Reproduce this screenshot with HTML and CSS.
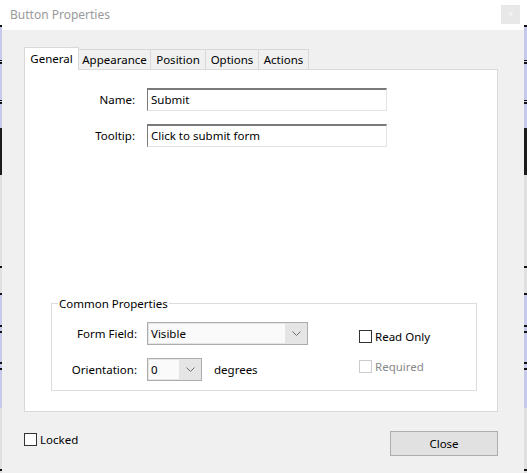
FILE: index.html
```html
<!DOCTYPE html>
<html>
<head>
<meta charset="utf-8">
<link rel="stylesheet" href="styles.css">
</head>
<body>
<div class="screen">
  <div class="strip strip-left"></div>
  <div class="window">
    <div class="titlebar">
      <span class="title">Button Properties</span>
      <span class="close-x">×</span>
    </div>
    <div class="body">
      <div class="tabs">
        <div class="tab active tab-general">General</div>
        <div class="tab tab-appearance">Appearance</div>
        <div class="tab tab-position">Position</div>
        <div class="tab tab-options">Options</div>
        <div class="tab tab-actions">Actions</div>
      </div>
      <div class="panel">
        <div class="fields">
          <label class="lbl">Name:</label>
          <div class="input">Submit</div>
          <label class="lbl">Tooltip:</label>
          <div class="input">Click to submit form</div>
        </div>
        <fieldset class="group">
          <legend class="legend">Common Properties</legend>
          <div class="group-inner">
            <div class="group-grid">
              <span class="glbl">Form Field:</span>
              <div class="select select-wide">
                <span class="select-text">Visible</span>
                <span class="select-arrow"><svg width="9" height="5" viewBox="0 0 9 5"><polyline points="0.5,0.5 4.5,4.5 8.5,0.5" fill="none" stroke="#6d6d6d" stroke-width="1"/></svg></span>
              </div>
              <span class="glbl">Orientation:</span>
              <div class="orient-row">
                <div class="select select-narrow">
                  <span class="select-text">0</span>
                  <span class="select-arrow"><svg width="9" height="5" viewBox="0 0 9 5"><polyline points="0.5,0.5 4.5,4.5 8.5,0.5" fill="none" stroke="#6d6d6d" stroke-width="1"/></svg></span>
                </div>
                <span class="degrees">degrees</span>
              </div>
            </div>
            <div class="checks">
              <div class="check"><span class="box"></span><span>Read Only</span></div>
              <div class="check disabled"><span class="box"></span><span>Required</span></div>
            </div>
          </div>
        </fieldset>
      </div>
      <div class="footer">
        <div class="check"><span class="box"></span><span>Locked</span></div>
        <div class="button">Close</div>
      </div>
    </div>
  </div>
  <div class="strip strip-right"></div>
</div>
</body>
</html>
```

FILE: styles.css
```css
html, body {
  margin: 0;
  padding: 0;
}
body {
  width: 527px;
  height: 473px;
  overflow: hidden;
  font-family: "Noto Sans", "DejaVu Sans", sans-serif;
  font-size: 11.5px;
  color: #000;
  background: #fff;
}
.screen {
  display: flex;
  width: 527px;
  height: 473px;
}
.strip {
  height: 473px;
  background: linear-gradient(to bottom,
    #ffffff 0, #ffffff 25px,
    #111 25px, #111 27px,
    #c6c9ea 27px, #c6c9ea 60px,
    #111 60px, #111 61px, #c6c9ea 61px, #c6c9ea 62px, #111 62px, #111 64px,
    #c6c9ea 64px, #c6c9ea 100px,
    #111 100px, #111 101px, #c6c9ea 101px, #c6c9ea 102px, #111 102px, #111 104px,
    #c6c9ea 104px, #c6c9ea 128px,
    #1c1c1c 128px, #1c1c1c 175px,
    #e0e0e0 175px, #e0e0e0 266px,
    #111 266px, #111 268px,
    #e0e0e0 268px, #e0e0e0 293px,
    #111 293px, #111 295px,
    #c6c9ea 295px, #c6c9ea 325px,
    #111 325px, #111 327px, #c6c9ea 327px, #c6c9ea 331px, #111 331px, #111 333px,
    #c6c9ea 333px, #c6c9ea 362px,
    #111 362px, #111 364px, #c6c9ea 364px, #c6c9ea 368px, #111 368px, #111 370px,
    #c6c9ea 370px, #c6c9ea 408px,
    #e0e0e0 408px, #e0e0e0 469px,
    #111 469px, #111 471px,
    #e0e0e0 471px);
}
.strip-left {
  width: 2px;
}
.strip-right {
  width: 3px;
}
.window {
  flex: 1;
  display: flex;
  flex-direction: column;
  background: #f0f0f0;
}
.titlebar {
  height: 30px;
  background: #fff;
  display: flex;
  align-items: center;
  justify-content: space-between;
  padding: 0 4px 0 8px;
}
.title {
  color: #9a9a9a;
  font-size: 12px;
  margin-top: -1px;
}
.close-x {
  width: 19px;
  height: 19px;
  margin-top: -2px;
  background: #e8e8e8;
  color: #f8f8f8;
  font-size: 10px;
  line-height: 19px;
  text-align: center;
}
.body {
  flex: 1;
  padding: 17px 26px 0 22px;
  display: flex;
  flex-direction: column;
}
.tabs {
  display: flex;
  align-items: flex-end;
  height: 22px;
}
.tab {
  height: 20px;
  line-height: 20px;
  border: 1px solid #d9d9d9;
  border-bottom: none;
  border-left: none;
  background: #f0f0f0;
  box-sizing: border-box;
  text-align: center;
}
.tab.active {
  height: 23px;
  line-height: 21px;
  background: #fff;
  border-left: 1px solid #d9d9d9;
  margin-bottom: -1px;
  position: relative;
  z-index: 1;
}
.tab-general { width: 55px; }
.tab-appearance { width: 72px; }
.tab-position { width: 55px; }
.tab-options { width: 53px; }
.tab-actions { width: 50px; }
.panel {
  height: 343px;
  box-sizing: border-box;
  border: 1px solid #d9d9d9;
  background: #fff;
  display: flex;
  flex-direction: column;
  padding: 18px 20px 20px 26px;
}
.fields {
  display: grid;
  grid-template-columns: 84px 240px;
  column-gap: 12px;
  row-gap: 13px;
  align-items: center;
}
.lbl {
  text-align: right;
}
.input {
  height: 23px;
  box-sizing: border-box;
  border: 1px solid #e3e3e3;
  border-top: 2px solid #7a7a7a;
  border-left: 1px solid #7a7a7a;
  line-height: 19px;
  padding-left: 3px;
  background: #fff;
}
.group {
  margin: auto 0 0 0;
  padding: 11px 0 9px 0;
  border: 1px solid #dcdcdc;
  min-width: 0;
}
.legend {
  padding: 0 1px;
  margin-left: 6px;
}
.group-inner {
  display: flex;
}
.group-grid {
  display: grid;
  grid-template-columns: 85px auto;
  column-gap: 10px;
  row-gap: 13px;
  align-items: center;
}
.glbl {
  text-align: right;
}
.select {
  height: 23px;
  box-sizing: border-box;
  border: 1px solid #acacac;
  background: #e5e5e5;
  display: flex;
  align-items: stretch;
}
.select-wide {
  width: 161px;
}
.select-narrow {
  width: 55px;
}
.select-text {
  flex: 1;
  background: #fafafa;
  margin: 1px 0 1px 1px;
  line-height: 19px;
  padding-left: 2px;
}
.select-arrow {
  width: 22px;
  display: flex;
  align-items: center;
  justify-content: center;
}
.orient-row {
  display: flex;
  align-items: center;
  gap: 12px;
}
.checks {
  display: flex;
  flex-direction: column;
  gap: 15px;
  margin-left: 51px;
  padding-top: 7px;
}
.check {
  display: flex;
  align-items: center;
  gap: 3px;
}
.box {
  width: 13px;
  height: 13px;
  box-sizing: border-box;
  border: 1px solid #333;
  background: #fff;
}
.check.disabled {
  color: #8a8a8a;
}
.check.disabled .box {
  border-color: #cccccc;
}
.footer {
  display: flex;
  justify-content: space-between;
  align-items: flex-start;
  margin-top: 19px;
}
.footer .check {
  margin-top: 1px;
}
.button {
  width: 108px;
  height: 25px;
  box-sizing: border-box;
  border: 1px solid #adadad;
  background: #e1e1e1;
  text-align: center;
  line-height: 23px;
}
```
